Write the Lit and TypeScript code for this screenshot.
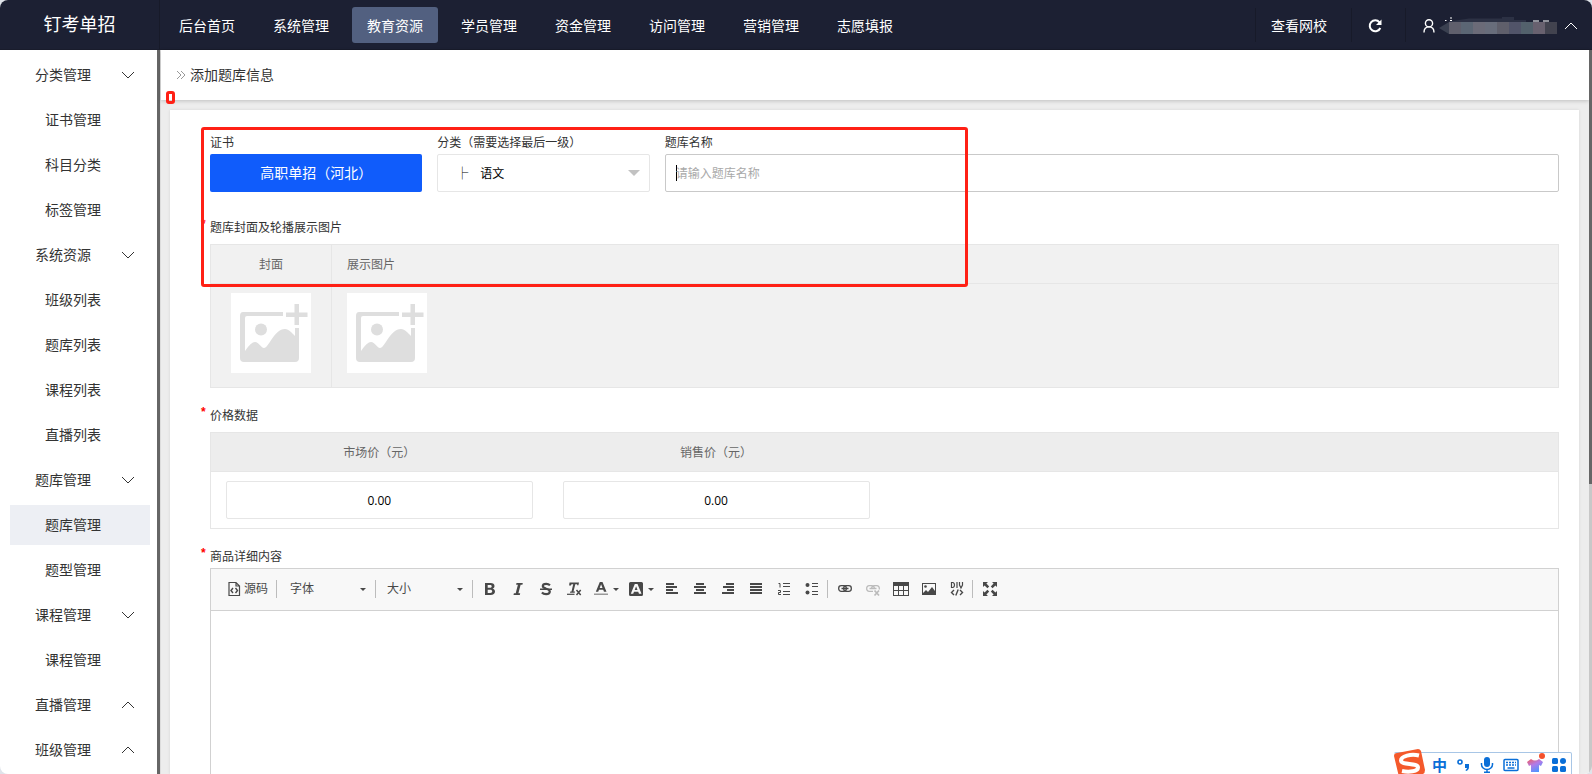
import { LitElement, html, css, svg } from "lit";
import { customElement, state } from "lit/decorators.js";
import { classMap } from "lit/directives/class-map.js";

interface MenuGroup {
  name: string;
  open: boolean;
  items: string[];
}

const NAV = ["后台首页", "系统管理", "教育资源", "学员管理", "资金管理", "访问管理", "营销管理", "志愿填报"];

const MENU: MenuGroup[] = [
  { name: "分类管理", open: true, items: ["证书管理", "科目分类", "标签管理"] },
  { name: "系统资源", open: true, items: ["班级列表", "题库列表", "课程列表", "直播列表"] },
  { name: "题库管理", open: true, items: ["题库管理", "题型管理"] },
  { name: "课程管理", open: true, items: ["课程管理"] },
  { name: "直播管理", open: false, items: [] },
  { name: "班级管理", open: false, items: [] },
];

const chevron = (down: boolean) => html`<svg class="chevron" viewBox="0 0 14 14" aria-hidden="true">
  <path d=${down ? "M1 4l6 6 6-6" : "M1 10l6-6 6 6"} fill="none" stroke="currentColor" />
</svg>`;

const lines = (rows: number[][]) => rows.map(([x, w], i) => svg`<rect x=${x} y=${2 + i * 3} width=${w} height="2"/>`);

const ICONS = {
  source: svg`<path d="M3 1.500h7l3.500 3.500v9.500h-10.500zM10 1.500v3.500h3.500" fill="none" stroke="currentColor" stroke-width="1.200"/><path d="M7 7l-2 2.500 2 2.500M9.500 7l2 2.500-2 2.500" fill="none" stroke="currentColor" stroke-width="1.400"/>`,
  bold: svg`<path fill-rule="evenodd" d="M3 2h5.500c2.600 0 4 1.200 4 3.100 0 1.300-.7 2.200-1.900 2.600 1.500.3 2.400 1.300 2.400 2.800 0 2.200-1.700 3.500-4.400 3.500H3zM5.700 4v2.800h2c1.300 0 2-.5 2-1.400S9 4 7.800 4zM5.700 8.700V12h2.500c1.300 0 2-.6 2-1.700s-.7-1.600-2-1.600z"/>`,
  italic: svg`<path d="M6.500 2h6.300l-.4 1.800h-1.800L8.400 12.200h1.800L9.800 14H3.500l.4-1.800h1.800l2.200-8.400H6.100z"/>`,
  strike: svg`<path d="M12 4.200C11 3.300 9.700 2.800 8.200 2.800c-2 0-3.400.8-3.400 2.300 0 1.700 1.600 2.100 3.400 2.600 2 .5 3.600 1.100 3.600 2.900 0 1.700-1.500 2.600-3.700 2.600-1.700 0-3.200-.5-4.200-1.600" fill="none" stroke="currentColor" stroke-width="2.200"/><path d="M2 7.500h12V9H2z"/>`,
  clear: svg`<path d="M3.500 1.500h9.500l-.6 2.700h-1.300l.1-1H9.300L7.500 10.500H9l-.3 1.300H4l.3-1.300h1.200L7.200 3.200H5.500l-.6 1.200H3.100z"/><path d="M1 12.700h7.500v1.200H1z"/><path d="M10.500 9l4.200 5M14.700 9l-4.200 5" stroke="currentColor" stroke-width="1.500"/>`,
  color: svg`<path fill-rule="evenodd" d="M6.800 1h2.700l4 9.700h-2.500l-.8-2H6l-.8 2H2.800zM6.700 6.900h2.800L8.100 3.200z"/><path d="M1 12.500h14V14H1z" fill="#999"/>`,
  bgcolor: svg`<path fill-rule="evenodd" d="M2.500 1h11A1.500 1.500 0 0 1 15 2.500v11a1.500 1.500 0 0 1-1.500 1.500h-11A1.500 1.500 0 0 1 1 13.500v-11A1.500 1.500 0 0 1 2.500 1zM6.800 3l-4 9.700h2.400l.8-2h4.200l.8 2h2.500L9.500 3zM6.700 8.900l1.400-3.700 1.400 3.700z"/>`,
  left: svg`${lines([[2, 8], [2, 11], [2, 7], [2, 12]])}`,
  center: svg`${lines([[4, 8], [2, 12], [4, 8], [2, 12]])}`,
  right: svg`${lines([[6, 8], [3, 11], [7, 7], [2, 12]])}`,
  justify: svg`${lines([[2, 12], [2, 12], [2, 12], [2, 12]])}`,
  ordered: svg`<path d="M7 2h7v1H7zM7 5h7v1H7zM7 10h7v1H7zM7 13h7v1H7z"/><path d="M2.500 2.500h1.500v4M2 9.500h2.500v2h-2v2H5" fill="none" stroke="currentColor"/>`,
  bullets: svg`<circle cx="3.500" cy="4" r="2"/><circle cx="3.500" cy="11.500" r="2"/><path d="M8 2h6v1H8zM8 5h6v1H8zM8 10h6v1H8zM8 13h6v1H8z"/>`,
  link: svg`<g fill="none" stroke="currentColor" stroke-width="1.300"><rect x="1.700" y="4.700" width="7.600" height="5.600" rx="2.500"/><rect x="6.700" y="4.700" width="7.600" height="5.600" rx="2.500"/><path d="M4.500 7.500h7" stroke-width="1.500"/></g>`,
  unlink: svg`<g fill="none" stroke="currentColor" stroke-width="1.300"><path d="M8 10.300H4.200a2.500 2.500 0 0 1-2.500-2.800 2.500 2.500 0 0 1 2.500-2.800h2.600a2.500 2.500 0 0 1 2.500 2.800M6.700 7.500a2.500 2.500 0 0 1 2.500-2.800h2.600a2.500 2.500 0 0 1 2.500 2.800v1M4.500 7.500h7"/><path d="M9.500 9.500l4.500 5M14 9.500l-4.500 5" stroke-width="1.700"/></g>`,
  table: svg`<path fill-rule="evenodd" d="M0 1h16v14H0zM1 5v4h4V5zM6 5v4h4V5zM11 5v4h4V5zM1 10v4h4v-4zM6 10v4h4v-4zM11 10v4h4v-4z"/>`,
  image: svg`<path fill-rule="evenodd" d="M1 2h14v12H1zM2 3v9l3-3 2 2 4-5 3 4V3z"/><circle cx="4.500" cy="5.500" r="1.300"/>`,
  div: svg`<g fill="none" stroke="currentColor" stroke-width="1.200"><path d="M2.500 1v6M2.500 1.500h1.500q1.500.5 1.500 2.500T4 6.500H2.500M8 1v6M10.500 1v3l1.500 3 1.500-3V1"/><path d="M5 9l-2.500 2.500L5 14M11 9l2.500 2.500L11 14M9.200 8.500l-2.400 6" stroke-width="1.400"/></g>`,
  maximize: svg`<path d="M1 1h5L4.400 2.600l2.800 2.800-1.800 1.800-2.800-2.800L1 6zM15 1v5l-1.600-1.600-2.800 2.800-1.800-1.800 2.800-2.800L10 1zM1 15v-5l1.600 1.600 2.800-2.800 1.800 1.800-2.800 2.800L6 15zM15 15h-5l1.600-1.600-2.800-2.800 1.800-1.800 2.800 2.800L15 10z"/>`,
};

const icon = (name: keyof typeof ICONS) => html`<svg class="icon" viewBox="0 0 16 16" fill="currentColor" aria-hidden="true">${ICONS[name]}</svg>`;

const tool = (name: keyof typeof ICONS, label: string, disabled = false) =>
  html`<button class="tool" type="button" aria-label=${label} ?disabled=${disabled}>${icon(name)}</button>`;

const dropTool = (name: keyof typeof ICONS, label: string) =>
  html`<button class="tool drop" type="button" aria-label=${label}>${icon(name)}<i class="caret"></i></button>`;

const picture = html`<svg class="picture" viewBox="0 0 80 80" aria-hidden="true">
  <g fill="#dedede">
    <path d="M12 19h40v4H16q-2 0-2 2v33q6-9 10-9c4 0 6 6 9 6 5 0 10-19 21-19 4 0 7 4 10 7V35h4v30q0 4-4 4H13q-4 0-4-4V23q0-4 3-4z" />
    <circle cx="30" cy="36.500" r="6" />
    <path d="M63.500 11h4.500v8.500h8.500V24H68v8h-4.500v-8H55v-4.500h8.500z" />
  </g>
</svg>`;

@customElement("app-root")
export class AppRoot extends LitElement {
  static styles = css`
    :host {
      display: block;
      height: 100vh;
      overflow: hidden;
      font: 14px/20px "Open Sans", "Noto Sans CJK SC", sans-serif;
      color: #333;
      background: #dfe3ea;
    }
    * { box-sizing: border-box; }
    a { color: inherit; text-decoration: none; }
    button, input, select, textarea { font: inherit; color: inherit; margin: 0; }
    .shell {
      position: relative;
      display: flex;
      flex-direction: column;
      height: 100%;
      border-radius: 8px;
      overflow: hidden;
      background: #fff;
    }
    .top {
      display: flex;
      flex: none;
      height: 50px;
      background: #1c2033;
      border-bottom: 1px solid #191c2c;
      color: #fff;
      align-items: center;
    }
    .logo {
      width: 160px;
      height: 49px;
      border-right: 1px solid #171a29;
      font-size: 18px;
      line-height: 49px;
      text-align: center;
    }
    .nav { display: flex; gap: 8px; padding-left: 4px; flex: 1; }
    .nav a { padding: 9px 15px 7px; border-radius: 3px; }
    .nav a.active { background: #526080; }
    .tools { display: flex; align-items: center; }
    .tools > * {
      display: flex;
      align-items: center;
      height: 34px;
      border: 0;
      border-left: 1px solid #171a29;
      background: none;
      color: #fff;
    }
    .tools .visit { padding: 2px 24px 0 15px; }
    .refresh { width: 54px; padding: 2px 15px 0; }
    .refresh svg { width: 16px; height: 16px; flex: none; }
    .user { padding: 2px 14px 0 16px; }
    .user svg { display: block; }
    .person { width: 14px; height: 16px; }
    .masked { width: 128px; height: 20px; }
    .body { display: flex; flex: 1; min-height: 0; }
    .side {
      width: 160px;
      flex: none;
      padding: 5px 7px 0 10px;
      border-right: 3px solid #666;
      overflow: hidden;
    }
    .side ul { list-style: none; margin: 0; padding: 0; }
    .group {
      display: flex;
      align-items: center;
      justify-content: space-between;
      width: 140px;
      height: 40px;
      margin-bottom: 5px;
      padding: 0 15px 0 25px;
      border: 0;
      background: none;
      text-align: left;
    }
    .chevron { width: 14px; height: 14px; flex: none; }
    .entry {
      display: block;
      width: 140px;
      padding: 10px 0 10px 35px;
      margin-bottom: 5px;
    }
    .entry.active { background: #edeff4; }
    .main {
      position: relative;
      display: flex;
      flex-direction: column;
      flex: 1;
      min-width: 0;
      background: #ededed;
      border-left: 1px solid #ddd;
    }
    .content { flex: 1; min-height: 0; display: flex; }
    .scroll { flex: 1; min-width: 0; display: flex; flex-direction: column; }
    .track { width: 3px; flex: none; background: #c8c8c8; }
    .thumb { height: 60%; background: #666; }
    .crumb {
      display: flex;
      align-items: center;
      gap: 4px;
      flex: none;
      height: 50px;
      padding-left: 15px;
      background: #fff;
      box-shadow: 0 1px 4px rgba(0, 0, 0, 0.2);
    }
    .crumb svg { width: 10px; height: 10px; }
    .card {
      position: relative;
      display: flex;
      flex-direction: column;
      flex: 1;
      min-height: 0;
      margin: 10px 10px 0 9px;
      padding: 23px 20px 0 40px;
      background: #fff;
      box-shadow: 0 0 3px rgba(0, 0, 0, 0.1);
      font-size: 12px;
    }
    .row { display: grid; grid-template-columns: repeat(12, minmax(0, 1fr)); column-gap: 15px; }
    .field { display: flex; flex-direction: column; grid-column: span 2; }
    .field.wide { grid-column: span 8; }
    .label { display: block; height: 21px; line-height: 20px; }
    .choice {
      height: 38px;
      border: 0;
      border-radius: 2px;
      background: #105cfb;
      color: #fff;
      font-size: 14px;
    }
    .select, .text {
      width: 100%;
      height: 38px;
      border: 1px solid #e6e6e6;
      border-radius: 2px;
      background: #fff;
      color: #000;
      outline: none;
    }
    .picker { position: relative; display: flex; }
    .select { appearance: none; padding: 2px 30px 0 18px; white-space: pre; }
    .picker::after {
      content: "";
      position: absolute;
      right: 10px;
      top: 16px;
      border: 6px solid transparent;
      border-top-color: #c2c2c2;
      pointer-events: none;
    }
    .name {
      padding: 0 10px;
      border-color: #c9c9c9;
      background: linear-gradient(#000, #000) 10px 10px / 1px 16px no-repeat;
    }
    .name::placeholder { color: #a9a9a9; opacity: 1; }
    .section { margin-top: 26px; }
    .section.price { margin-top: 18px; }
    .section.detail { display: flex; flex-direction: column; flex: 1; min-height: 0; margin-top: 18px; }
    .title { position: relative; height: 26px; line-height: 20px; }
    .title.tight { height: 21px; }
    .title::before {
      content: "*";
      position: absolute;
      left: -9px;
      top: -4px;
      color: #f00;
      font-family: "Liberation Sans", sans-serif;
      font-weight: 700;
    }
    table {
      width: 100%;
      border-collapse: collapse;
      table-layout: fixed;
      border: 1px solid #e6e6e6;
      color: #666;
    }
    th { height: 39px; padding: 2px 15px 0; font-weight: 400; border-bottom: 1px solid #e6e6e6; }
    .media { background: #f1f1f1; }
    .media th, .media td { border-right: 1px solid #e6e6e6; }
    .media .cover { width: 121px; text-align: center; }
    .media th + th { text-align: left; }
    .media td { height: 104px; padding: 9px 15px 13px; vertical-align: top; }
    .upload { display: inline-block; padding: 0; border: 0; background: #fff; vertical-align: top; }
    .picture { display: block; width: 80px; height: 80px; }
    .prices th { background: #ededed; }
    .prices td { height: 57px; padding: 9px 15px; }
    .prices .quarter { width: 25%; }
    .prices .text { display: block; text-align: center; padding: 0 10px; }
    .editor {
      display: flex;
      flex-direction: column;
      flex: 1;
      min-height: 0;
      border: 1px solid #d1d1d1;
      border-bottom: 0;
    }
    .toolbar {
      display: flex;
      align-items: center;
      flex: none;
      height: 42px;
      padding: 0 7px 1px;
      background: #f8f8f8;
      border-bottom: 1px solid #d1d1d1;
      color: #484848;
    }
    .tool {
      display: flex;
      align-items: center;
      justify-content: center;
      flex: none;
      width: 28px;
      height: 28px;
      padding: 0;
      border: 0;
      background: none;
      color: inherit;
    }
    .tool:disabled { color: #bbb; }
    .tool.drop { width: 35px; gap: 4px; }
    .tool.code { width: 58px; gap: 2px; }
    .icon { width: 16px; height: 16px; flex: none; }
    .caret { border: 3px solid transparent; border-top-color: #484848; border-bottom: 0; flex: none; }
    .sep { width: 1px; height: 18px; background: #bcbcbc; flex: none; }
    .combo {
      display: flex;
      align-items: center;
      justify-content: space-between;
      width: 98px;
      height: 28px;
      padding: 0 9px 0 13px;
      border: 0;
      background: none;
      color: inherit;
    }
    .combo.size { width: 96px; padding-left: 11px; }
    .sep + .tool { margin-left: 3px; }
    .tool + .sep { margin-left: 1px; }
    .tool.code + .sep { margin-left: 0; }
    .writing { flex: 1; min-height: 0; width: 100%; border: 0; padding: 20px; resize: none; outline: none; }
    .mark {
      position: absolute;
      border: 3px solid #ff2015;
      border-radius: 3px;
      pointer-events: none;
    }
    .mark.big { left: 31px; top: 17px; width: 767px; height: 160px; }
    .mark.small { left: 5px; top: 41px; width: 9px; height: 13px; }
    .ime {
      position: absolute;
      right: 20px;
      bottom: -4px;
      display: flex;
      align-items: center;
      gap: 8px;
      height: 26px;
      padding: 0 4px 0 38px;
      border: 1px solid #a8c6e6;
      border-left: 0;
      border-radius: 2px;
      background: #fff;
      color: #0a6fd8;
      font-size: 15px;
      font-weight: 700;
    }
    .ime svg { width: 16px; height: 16px; flex: none; }
    .ime .sogou { position: absolute; left: 0; top: -5px; width: 32px; height: 32px; }
  `;

  @state() private section = "教育资源";
  @state() private menu = MENU;

  private toggle(group: MenuGroup) {
    this.menu = this.menu.map((g) => (g === group ? { ...g, open: !g.open } : g));
  }

  private renderTop() {
    const blocks = ["#5f5f6c", "#5b6674", "#6b6b78", "#686d7b", "#5f5f6b", "#515469", "#53616c", "#68616f", "#42434f"];
    return html`<header class="top">
      <div class="logo">钉考单招</div>
      <nav class="nav">
        ${NAV.map((n) => html`<a href="#" class=${classMap({ active: n === this.section })} @click=${() => (this.section = n)}>${n}</a>`)}
      </nav>
      <div class="tools">
        <a class="visit" href="#">查看网校</a>
        <button class="refresh" aria-label="刷新">
          <svg viewBox="0 0 16 16" fill="none" stroke="currentColor" stroke-width="2">
            <path d="M12.500 4.300A5.500 5.500 0 1 0 13.300 10" /><path d="M14.500 1.500v5.500H9z" fill="currentColor" stroke="none" />
          </svg>
        </button>
        <button class="user" aria-label="用户">
          <svg class="person" viewBox="0 0 14 16" fill="none" stroke="currentColor" stroke-width="1.400">
            <circle cx="7" cy="5.300" r="3.600" /><path d="M2 14.500c0-3.500 2-5.600 5-5.600s5 2.100 5 5.600" />
          </svg>
          <svg class="masked" viewBox="0 0 128 20" aria-hidden="true">
            <path d="M13 5.500l20-3h33V1h12v3h12v3H13z" fill="#2c3144" />
            <path d="M9 4.500h1.500M14 2h2M14 4.500h2M97 5h6M107 5h6" stroke="#fff" stroke-width="1.200" />
            <path d="M13 6v12l-10-6z" fill="#3a4050" />
            ${blocks.map((c, i) => svg`<rect x=${13 + i * 12} y="6" width="12" height="12" fill=${c} />`)}
          </svg>
          ${chevron(false)}
        </button>
      </div>
    </header>`;
  }

  private renderSide() {
    return html`<aside class="side">
      <ul>
        ${this.menu.map(
          (g, gi) => html`<li>
            <button class="group" aria-expanded=${g.open} @click=${() => this.toggle(g)}>${g.name}${chevron(g.open)}</button>
            ${g.open
              ? html`<ul>
                  ${g.items.map((n) => html`<li><a href="#" class=${classMap({ entry: true, active: gi === 2 && n === "题库管理" })}>${n}</a></li>`)}
                </ul>`
              : null}
          </li>`,
        )}
      </ul>
    </aside>`;
  }

  private renderEditor() {
    return html`<div class="editor">
      <div class="toolbar" role="toolbar">
        <button class="tool code" type="button">${icon("source")}源码</button><i class="sep"></i>
        <button class="combo" type="button">字体<i class="caret"></i></button><i class="sep"></i>
        <button class="combo size" type="button">大小<i class="caret"></i></button><i class="sep"></i>
        ${tool("bold", "加粗")}${tool("italic", "倾斜")}${tool("strike", "删除线")}${tool("clear", "清除格式")}
        ${dropTool("color", "文本颜色")}${dropTool("bgcolor", "背景颜色")}
        ${tool("left", "左对齐")}${tool("center", "居中")}${tool("right", "右对齐")}${tool("justify", "两端对齐")}
        ${tool("ordered", "编号列表")}${tool("bullets", "项目列表")}<i class="sep"></i>
        ${tool("link", "超链接")}${tool("unlink", "取消超链接", true)}${tool("table", "表格")}${tool("image", "图像")}${tool("div", "DIV 容器")}<i class="sep"></i>
        ${tool("maximize", "全屏")}
      </div>
      <textarea class="writing" aria-label="商品详细内容"></textarea>
    </div>`;
  }

  private renderForm() {
    return html`<form class="card">
      <div class="row">
        <div class="field">
          <label class="label" for="cert">证书</label>
          <button class="choice" id="cert" type="button">高职单招（河北）</button>
        </div>
        <div class="field">
          <label class="label" for="kind">分类（需要选择最后一级）</label>
          <div class="picker">
            <select class="select" id="kind"><option>├\u3000语文</option></select>
          </div>
        </div>
        <div class="field wide">
          <label class="label" for="name">题库名称</label>
          <input class="text name" id="name" placeholder="请输入题库名称" />
        </div>
      </div>
      <section class="section">
        <div class="title">题库封面及轮播展示图片</div>
        <table class="media">
          <thead><tr><th class="cover">封面</th><th>展示图片</th></tr></thead>
          <tbody>
            <tr>
              <td class="cover"><button class="upload" type="button" aria-label="上传封面">${picture}</button></td>
              <td><button class="upload" type="button" aria-label="上传展示图片">${picture}</button></td>
            </tr>
          </tbody>
        </table>
      </section>
      <section class="section price">
        <div class="title">价格数据</div>
        <table class="prices">
          <thead><tr><th class="quarter">市场价（元）</th><th class="quarter">销售价（元）</th><th></th></tr></thead>
          <tbody>
            <tr>
              <td><input class="text" aria-label="市场价（元）" value="0.00" /></td>
              <td><input class="text" aria-label="销售价（元）" value="0.00" /></td>
              <td></td>
            </tr>
          </tbody>
        </table>
      </section>
      <section class="section detail">
        <div class="title tight">商品详细内容</div>
        ${this.renderEditor()}
      </section>
      <div class="mark big"></div>
    </form>`;
  }

  private renderIme() {
    return html`<div class="ime">
      <svg class="sogou" viewBox="0 0 32 32">
        <path d="M3 5L24 1q2 0 3 2l4 19q0 3-2 4L9 31q-3 0-4-2L0 8q0-3 3-3z" fill="#f4592b" />
        <path d="M25 7.500C17 5.500 7 8 7 12.500c0 5 17 2 17 7 0 4-9 5-16 3.500" fill="none" stroke="#fff" stroke-width="4" />
      </svg>
      <span>中</span>
      <svg viewBox="0 0 16 16"><circle cx="5" cy="5" r="2" fill="none" stroke="currentColor" stroke-width="1.600" /><path d="M10 7h4v3q0 3-3 4l-.5-1q1.500-.8 1.500-2H10z" fill="currentColor" /></svg>
      <svg viewBox="0 0 16 16"><rect x="5" width="6" height="10" rx="3" fill="currentColor" /><path d="M2.500 6v1.500a5.500 5 0 0 0 11 0V6M8 12.500V15M5 15.200h6" fill="none" stroke="currentColor" stroke-width="1.500" /></svg>
      <svg viewBox="0 0 16 16"><rect x="1" y="2.500" width="14" height="11" rx="1" fill="none" stroke="currentColor" stroke-width="1.500" /><path d="M3 5.500h10M3 8h10" stroke="currentColor" stroke-width="1.500" stroke-dasharray="2 1" /><path d="M4.500 11h7" stroke="currentColor" stroke-width="1.500" /></svg>
      <svg viewBox="0 0 16 16" overflow="visible">
        <defs><linearGradient id="shirt" x1="0" y1="0" x2="0.600" y2="1"><stop offset="0" stop-color="#f45b59" /><stop offset="0.500" stop-color="#b27be8" /><stop offset="1" stop-color="#4f94ff" /></linearGradient></defs>
        <path d="M4 2q4 3 8 0l4 3-2 4-2-1v7H4V8L2 9 0 5z" fill="url(#shirt)" /><circle cx="15" cy="-1" r="3" fill="#f4512c" />
      </svg>
      <svg viewBox="0 0 16 16" fill="currentColor"><rect x="1" y="1" width="6" height="6" rx="1.500" /><circle cx="12" cy="4" r="3" /><rect x="1" y="9" width="6" height="6" rx="1.500" /><rect x="9" y="9" width="6" height="6" rx="1.500" /></svg>
    </div>`;
  }

  render() {
    return html`<div class="shell">
      ${this.renderTop()}
      <div class="body">
        ${this.renderSide()}
        <main class="main">
          <div class="content">
            <div class="scroll">
              <div class="crumb">
                <svg viewBox="0 0 10 10" fill="none" stroke="#999"><path d="M1 1l4 4-4 4M5 1l4 4-4 4" /></svg>
                添加题库信息
              </div>
              ${this.renderForm()}
            </div>
            <div class="track"><div class="thumb"></div></div>
          </div>
          <div class="mark small"></div>
        </main>
      </div>
      ${this.renderIme()}
    </div>`;
  }
}
